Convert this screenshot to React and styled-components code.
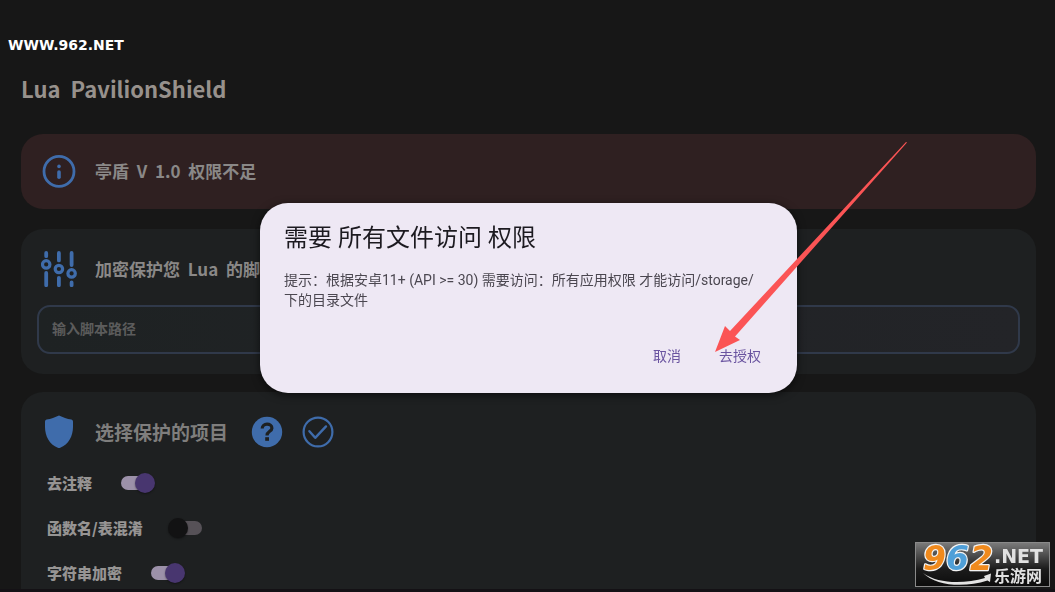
import React, { useState } from "react";

import styled, { createGlobalStyle } from "styled-components";

const App = () => {
  const [path, setPath] = useState("");
  const [options, setOptions] = useState([
    { id: "comments", label: "去注释", on: true },
    { id: "names", label: "函数名/表混淆", on: false },
    { id: "strings", label: "字符串加密", on: true },
  ]);

  const toggleOption = (id) => {
    setOptions(options.map((o) => (o.id === id ? { ...o, on: !o.on } : o)));
  };

  return (
    <>
      <GlobalStyle />
      <Page>
        <Site>WWW.962.NET</Site>
        <Title>Lua&nbsp; PavilionShield</Title>
        <Notice>
          <InfoIcon />
          <CardTitle>亭盾&nbsp; V&nbsp; 1.0&nbsp; 权限不足</CardTitle>
        </Notice>
        <Card>
          <CardHead>
            <SlidersIcon />
            <CardTitle as="label" htmlFor="script-path">
              加密保护您&nbsp; Lua&nbsp; 的脚本
            </CardTitle>
          </CardHead>
          <PathInput
            id="script-path"
            type="text"
            placeholder="输入脚本路径"
            value={path}
            onChange={(e) => setPath(e.target.value)}
          />
        </Card>
        <Card>
          <CardHead>
            <ShieldIcon />
            <CardTitle $large>选择保护的项目</CardTitle>
            <HeadActions>
              <IconButton type="button" aria-label="帮助">
                <HelpIcon />
              </IconButton>
              <IconButton type="button" aria-label="全选">
                <CheckIcon />
              </IconButton>
            </HeadActions>
          </CardHead>
          <Options>
            {options.map((o) => (
              <Option key={o.id}>
                {o.label}
                <Switch
                  type="checkbox"
                  checked={o.on}
                  onChange={() => toggleOption(o.id)}
                />
              </Option>
            ))}
          </Options>
        </Card>
      </Page>
      <Backdrop>
        <Dialog role="dialog" aria-labelledby="dialog-title">
          <h2 id="dialog-title">需要 所有文件访问 权限</h2>
          <p>
            提示：根据安卓11+ (API &gt;= 30) 需要访问：所有应用权限
            才能访问/storage/
            <br />
            下的目录文件
          </p>
          <DialogActions>
            <TextButton type="button">取消</TextButton>
            <TextButton type="button">去授权</TextButton>
          </DialogActions>
          <Arrow viewBox="0 0 192 211" aria-hidden="true">
            <path
              d="M0 210 L10 184 L15 189 L191 0 L192 0.6 L20 194.5 L25 198 Z"
              fill="#fb5455"
            />
          </Arrow>
        </Dialog>
      </Backdrop>
      <Badge href="#home" aria-label="962.NET 乐游网">
        <BadgeLogo />
      </Badge>
    </>
  );
};

// Icons
const InfoIcon = () => (
  <Icon viewBox="0 0 36 36">
    <circle cx="18" cy="18.4" r="15" stroke="currentColor" strokeWidth="2.8" />
    <circle cx="18" cy="13.4" r="1.8" fill="currentColor" />
    <path
      d="M18 19v5.2"
      stroke="currentColor"
      strokeWidth="3.6"
      strokeLinecap="round"
    />
  </Icon>
);

const SlidersIcon = () => (
  <Icon viewBox="0 0 36 36">
    <g stroke="currentColor" strokeWidth="3.8" strokeLinecap="round">
      <path d="M5.2 2v3.2M5.2 22v12.2" />
      <path d="M17.9 2v7.4M17.9 26.8v7.4" />
      <path d="M30.6 2v12M30.6 31.4v2.8" />
    </g>
    <g stroke="currentColor" strokeWidth="3.2">
      <circle cx="5.2" cy="13.4" r="3.7" />
      <circle cx="17.9" cy="18" r="3.7" />
      <circle cx="30.6" cy="22.4" r="3.7" />
    </g>
  </Icon>
);

const ShieldIcon = () => (
  <Icon viewBox="0 0 36 36">
    <path
      d="M18 1.4 C22 3.2 26 4.8 30.4 5.6 Q32 6 32 7.4 V13 C32 22 27.5 30.5 19.2 33.8 Q18 34.3 16.8 33.8 C8.5 30.5 4 22 4 13 V7.4 Q4 6 5.6 5.6 C10 4.8 14 3.2 18 1.4Z"
      fill="currentColor"
    />
  </Icon>
);

const HelpIcon = () => (
  <svg width="32" height="32" viewBox="0 0 32 32" fill="none">
    <circle cx="16" cy="16" r="15.2" fill="currentColor" />
    <path
      d="M11.2 12.6 C11.2 9.8 13.3 8.2 16 8.2 C18.8 8.2 20.9 9.8 20.9 12.2 C20.9 15.4 16 15.3 16 19.4"
      stroke="#1e2021"
      strokeWidth="3.2"
    />
    <path d="M14.2 21.2h3.8v3.6h-3.8z" fill="#1e2021" />
  </svg>
);

const CheckIcon = () => (
  <svg width="32" height="32" viewBox="0 0 32 32" fill="none">
    <circle cx="16" cy="16" r="14.4" stroke="currentColor" strokeWidth="2.2" />
    <path
      d="M7.4 15.2 L13.2 21.8 L24 10.4"
      stroke="currentColor"
      strokeWidth="2.4"
      strokeLinecap="round"
      strokeLinejoin="round"
    />
  </svg>
);

const BadgeLogo = () => (
  <svg width="133" height="43" viewBox="0 0 133 43" overflow="visible">
    <g
      fontFamily="'DejaVu Sans', sans-serif"
      fontWeight="bold"
      fontStyle="italic"
      fontSize="33"
      stroke="#f4f4f4"
      strokeWidth="2.4"
      paintOrder="stroke"
      strokeLinejoin="round"
    >
      <text x="7" y="27" fill="#f08a1d">
        9
      </text>
      <text x="30" y="27" fill="#4f9fd8">
        6
      </text>
      <text x="54" y="27" fill="#f08a1d">
        2
      </text>
    </g>
    <path
      d="M7 30 C22 41 48 41 69 35 L68 33 L75 30.5 L74 39 L71.5 37.5 C48 45 20 43 7 30Z"
      fill="#e4e4e4"
    />
    <text
      x="78"
      y="20"
      fill="#e2e2e2"
      fontFamily="'DejaVu Sans', sans-serif"
      fontWeight="bold"
      fontSize="19"
    >
      .NET
    </text>
    <text
      x="78"
      y="39"
      fill="#e2e2e2"
      fontFamily="'Noto Sans CJK SC', sans-serif"
      fontWeight="bold"
      fontSize="16"
    >
      乐游网
    </text>
  </svg>
);

// Styles
const GlobalStyle = createGlobalStyle`
  * {
    margin: 0;
    padding: 0;
    box-sizing: border-box;
  }
  body {
    background: #171717;
    font-family: "Noto Sans CJK SC", sans-serif;
    overflow: hidden;
  }
  button, input {
    font-family: inherit;
  }
`;

const Page = styled.main`
  height: 100vh;
  padding: 35px 19px 0 21px;
  overflow: hidden;
  border-bottom: 3px solid #141115;
`;

const Site = styled.p`
  margin-left: -13px;
  color: #fff;
  font-family: "DejaVu Sans", sans-serif;
  font-size: 14px;
  font-weight: bold;
  line-height: 20px;
`;

const Title = styled.h1`
  margin: 15px 0 28px;
  color: #97918c;
  font-size: 22px;
  font-weight: bold;
  line-height: 36px;
`;

const Card = styled.section`
  margin-bottom: 18px;
  padding: 22px 16px 20px;
  background: #1e2021;
  border-radius: 22px;
`;

const Notice = styled(Card)`
  display: flex;
  align-items: center;
  gap: 18px;
  margin-bottom: 20px;
  padding: 19px 20px 20px;
  background: #2f2021;
`;

const CardHead = styled.div`
  display: flex;
  align-items: center;
  gap: 18px;
  padding: 0 4px;
`;

const CardTitle = styled.h2`
  color: ${(props) => (props.$large ? "#7f7e7d" : "#8a8887")};
  font-size: ${(props) => (props.$large ? "19px" : "17px")};
  font-weight: bold;
  line-height: 34px;
`;

const Icon = styled.svg.attrs({ fill: "none", "aria-hidden": true })`
  width: 36px;
  height: 36px;
  flex: none;
  color: #3f6cab;
`;

const HeadActions = styled.div`
  display: flex;
  gap: 19px;
  margin-left: 5px;
`;

const IconButton = styled.button`
  display: flex;
  background: none;
  border: none;
  color: #3f6cab;
  cursor: pointer;
`;

const PathInput = styled.input`
  display: block;
  width: 100%;
  height: 49px;
  margin-top: 18px;
  padding: 0 13px 4px;
  background: linear-gradient(90deg, #1e2223, #232428);
  border: 2px solid #30394a;
  border-radius: 13px;
  color: #8a8887;
  font-size: 14px;
  font-weight: bold;
  outline: none;
  &::placeholder {
    color: #5c5c5c;
  }
`;

const Options = styled.div`
  display: flex;
  flex-direction: column;
  align-items: flex-start;
  margin-top: 10px;
  padding-left: 10px;
`;

const Option = styled.label`
  display: flex;
  align-items: center;
  gap: 29px;
  height: 45px;
  color: #969493;
  font-size: 15px;
  font-weight: 900;
  cursor: pointer;
`;

const Switch = styled.input`
  position: relative;
  appearance: none;
  width: 30px;
  height: 14px;
  background: #565157;
  border-radius: 7px;
  cursor: pointer;
  &::after {
    content: "";
    position: absolute;
    top: -3px;
    left: -4px;
    width: 20px;
    height: 20px;
    background: #121213;
    border-radius: 50%;
    box-shadow: 0 1px 2px rgba(0, 0, 0, 0.4);
  }
  &:checked {
    background: #9c91a9;
  }
  &:checked::after {
    left: 14px;
    background: #48366f;
  }
`;

const Backdrop = styled.div`
  position: fixed;
  inset: 0;
  display: flex;
  align-items: center;
  justify-content: center;
  padding: 4px 0 0 2px;
`;

const Dialog = styled.div`
  position: relative;
  width: 51%;
  min-width: 520px;
  padding: 17px 24px 19px;
  background: #eee8f4;
  border-radius: 28px;
  box-shadow: 0 2px 8px rgba(0, 0, 0, 0.6);
  font-family: Roboto, "Noto Sans CJK SC", sans-serif;
  h2 {
    color: #1c1a20;
    font-size: 24px;
    font-weight: 400;
    line-height: 36px;
  }
  p {
    margin-top: 14px;
    color: #4b4750;
    font-size: 14px;
    line-height: 20px;
  }
`;

const DialogActions = styled.div`
  display: flex;
  justify-content: flex-end;
  gap: 14px;
  margin-top: 28px;
`;

const TextButton = styled.button`
  padding: 8px 12px;
  background: none;
  border: none;
  color: #6a54a0;
  font-size: 14px;
  line-height: 20px;
  cursor: pointer;
`;

const Arrow = styled.svg`
  position: absolute;
  top: -61px;
  right: -110px;
  width: 192px;
  height: 211px;
  pointer-events: none;
`;

const Badge = styled.a`
  position: fixed;
  right: 5px;
  bottom: 5px;
  display: flex;
  background: linear-gradient(#7a7a7a, #1c1c1c 60%, #0c0c0c);
  border: 1px solid #8a8a8a;
`;

export default App;
